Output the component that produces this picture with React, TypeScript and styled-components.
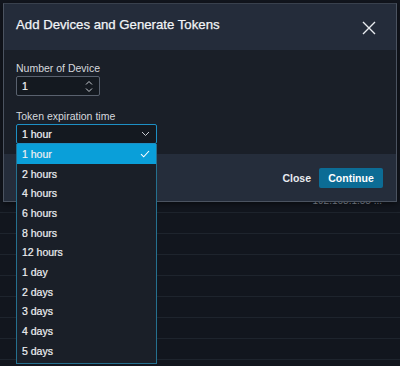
import React from "react";
import styled, { createGlobalStyle } from "styled-components";

const Global = createGlobalStyle`
  html, body { margin: 0; padding: 0; background: #12161e; }
  body { font-family: "Liberation Sans", Arial, sans-serif; width: 400px; height: 366px; overflow: hidden; }
  #root { position: relative; width: 400px; height: 366px; }
`;

const Page = styled.div`
  position: relative;
  width: 400px;
  height: 366px;
  background: #12161e;
  overflow: hidden;
`;

const Table = styled.div`
  display: flex;
  flex-direction: column;
  padding-top: 192px;
`;

const Row = styled.div`
  height: 20px;
  box-sizing: border-box;
  padding: 4px 18px 0 0;
  border-bottom: 1px solid #1e242d;
  display: flex;
  align-items: flex-start;
  justify-content: flex-end;
  color: #8e96a2;
  font-size: 10px;
  line-height: 10px;
  height: 21px;
`;

const Modal = styled.div`
  position: absolute;
  left: 3px;
  top: 3px;
  width: 392px;
  border: 1px solid #4b5360;
  border-top-color: #39414d;
  box-shadow: 0 2px 6px rgba(0, 0, 0, 0.5);
  display: flex;
  flex-direction: column;
`;

const Header = styled.div`
  height: 46px;
  background: #242c3a;
  display: flex;
  align-items: center;
  justify-content: space-between;
  padding: 0 20px 0 12px;
`;

const Title = styled.div`
  color: #f2f4f7;
  font-size: 13.2px;
  font-weight: 400;
  margin-top: -6px;
  -webkit-text-stroke: 0.25px #f2f4f7;
`;

const CloseIcon = styled.svg`
  width: 14px;
  height: 14px;
  margin-top: 1px;
`;

const Body = styled.div`
  background: #1a1f28;
  height: 104px;
  padding: 12px 12px 0;
  box-sizing: border-box;
  display: flex;
  flex-direction: column;
`;

const Label = styled.div`
  color: #d6d9de;
  font-size: 10.5px;
  line-height: 12px;
  margin-bottom: 2px;
`;

const Field = styled.div<{ $width: number; $focus?: boolean }>`
  position: relative;
  width: ${(p) => p.$width}px;
  height: 20px;
  box-sizing: border-box;
  border: 1px solid ${(p) => (p.$focus ? "#1d8fc4" : "#59616e")};
  border-radius: 2px;
  background: #141920;
  display: flex;
  align-items: center;
  justify-content: space-between;
  padding: 0 6px 0 5px;
  color: #f2f4f7;
  font-size: 10.5px;
  -webkit-text-stroke: 0.2px #f2f4f7;
  margin-bottom: ${(p) => (p.$focus ? 0 : 14)}px;
`;

const Footer = styled.div`
  height: 47px;
  background: #252d3b;
  display: flex;
  align-items: center;
  justify-content: flex-end;
  gap: 8px;
  padding: 0 13px 0 0;
`;

const TextButton = styled.button`
  background: none;
  border: none;
  color: #e8ebef;
  font-family: inherit;
  font-size: 10.5px;
  font-weight: 700;
  padding: 0;
  margin-top: 1px;
`;

const PrimaryButton = styled.button`
  width: 64px;
  height: 20px;
  background: #0c6c95;
  border: none;
  border-radius: 2px;
  color: #ffffff;
  font-family: inherit;
  font-size: 10.5px;
  font-weight: 700;
  padding: 0;
`;

const List = styled.div`
  position: absolute;
  left: 16px;
  top: 144px;
  width: 141px;
  box-sizing: border-box;
  border: 1px solid #25708f;
  border-top: none;
  background: #1a1f28;
  display: flex;
  flex-direction: column;
  padding-bottom: 2px;
`;

const Option = styled.div<{ $selected?: boolean }>`
  height: 19.7px;
  display: flex;
  align-items: center;
  justify-content: space-between;
  padding: 0 6px 0 5px;
  font-size: 10.5px;
  color: #eef0f3;
  -webkit-text-stroke: 0.2px #eef0f3;
  background: ${(p) => (p.$selected ? "#0a9fd9" : "transparent")};
`;

const options = [
  "1 hour",
  "2 hours",
  "4 hours",
  "6 hours",
  "8 hours",
  "12 hours",
  "1 day",
  "2 days",
  "3 days",
  "4 days",
  "5 days",
];

export default function App() {
  return (
    <Page>
      <Global />
      <Table>
        <Row>192.168.1.55 ...</Row>
        {Array.from({ length: 8 }).map((_, i) => (
          <Row key={i} />
        ))}
      </Table>
      <Modal>
        <Header>
          <Title>Add Devices and Generate Tokens</Title>
          <CloseIcon viewBox="0 0 14 14">
            <path d="M1 1L13 13M13 1L1 13" stroke="#e9ecf0" strokeWidth="1.4" fill="none" />
          </CloseIcon>
        </Header>
        <Body>
          <Label>Number of Device</Label>
          <Field $width={84}>
            <span>1</span>
            <svg width="8" height="13" viewBox="0 0 8 13">
              <path d="M1 4.5L4 1.5L7 4.5M1 8.5L4 11.5L7 8.5" stroke="#c8ccd2" strokeWidth="1" fill="none" />
            </svg>
          </Field>
          <Label>Token expiration time</Label>
          <Field $width={141} $focus>
            <span>1 hour</span>
            <svg width="9" height="6" viewBox="0 0 9 6">
              <path d="M1 1L4.5 4.5L8 1" stroke="#c8ccd2" strokeWidth="1" fill="none" />
            </svg>
          </Field>
        </Body>
        <Footer>
          <TextButton>Close</TextButton>
          <PrimaryButton>Continue</PrimaryButton>
        </Footer>
      </Modal>
      <List>
        {options.map((o, i) => (
          <Option key={o} $selected={i === 0}>
            <span>{o}</span>
            {i === 0 && (
              <svg width="10" height="8" viewBox="0 0 10 8">
                <path d="M1 4.2L3.7 6.8L9 1" stroke="#ffffff" strokeWidth="1.1" fill="none" />
              </svg>
            )}
          </Option>
        ))}
      </List>
    </Page>
  );
}
